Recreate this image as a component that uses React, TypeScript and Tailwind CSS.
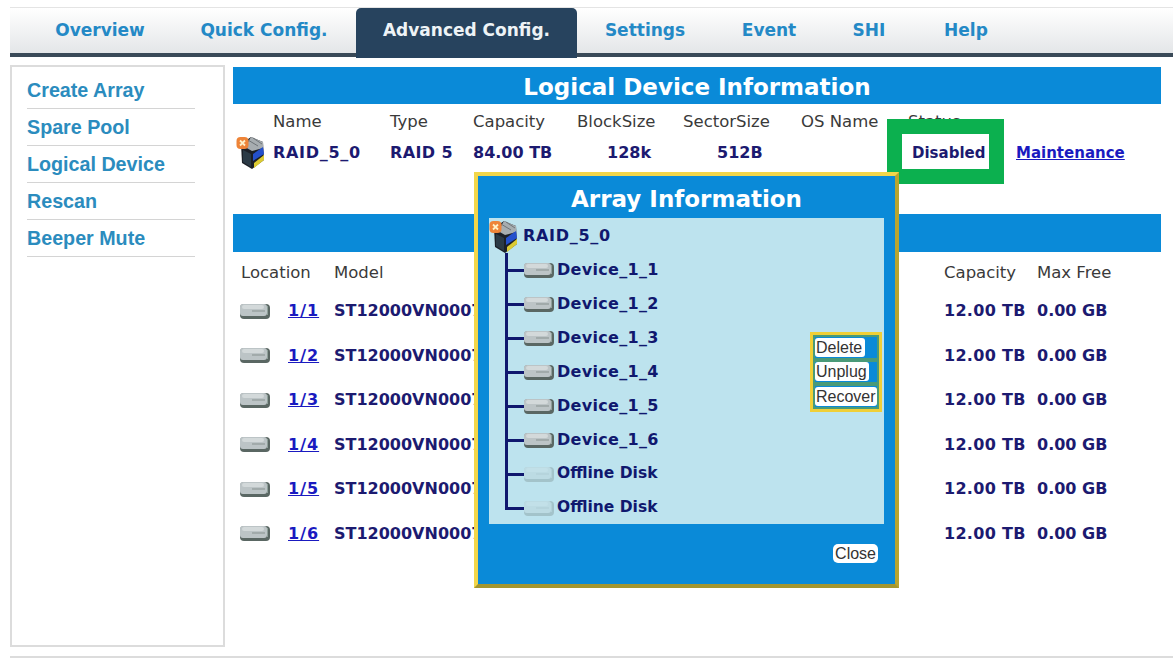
const verdana = "font-['DejaVu_Sans',sans-serif]";

function RaidIcon() {
  return (
    <svg width="30" height="34" viewBox="0 0 30 34" className="block">
      <path d="M5 8 L15 1 L27 6 L28 24 L16 33 L6 27 Z" fill="#1c2028" />
      <path d="M15 1 L27 6 L27 12 L16 15 L9 11 Z" fill="#a7adb0" />
      <path d="M12 4 L22 10 M17 2 L26 8" stroke="#6e7478" strokeWidth="1" />
      <path d="M17 18 L27 11 L28 18 L17 25 Z" fill="#2450cc" />
      <path d="M18 27 L28 19 L28 24 L18 32 Z" fill="#dccb33" />
      <path d="M7 14 L15 18 L15 31 L7 26 Z" fill="#2b3a46" />
      <rect x="0.5" y="1" width="12" height="12" rx="4" fill="#ee8438" />
      <path d="M4 4.5 L9 9.5 M9 4.5 L4 9.5" stroke="#fff0c8" strokeWidth="1.8" />
    </svg>
  );
}

function DiskIcon({ off = false }: { off?: boolean }) {
  return (
    <svg width="30" height="17" viewBox="0 0 30 17" className="block" opacity={off ? 0.25 : 1}>
      <rect x="0" y="1" width="30" height="15" rx="4" fill="#5a6763" />
      <rect x="0" y="1" width="27" height="12" rx="3" fill="#bcc4c6" />
      <rect x="2" y="2" width="22" height="4" rx="2" fill="#d3d9da" />
      <path d="M12 8 L25 8" stroke="#87918f" strokeWidth="1" />
      <path d="M27.5 3 L27.5 12" stroke="#8fa09a" strokeWidth="1" />
    </svg>
  );
}

const navItems = [
  { label: "Overview", w: "w-[180px]" },
  { label: "Quick Config.", w: "w-[166px] pr-[18px]" },
  { label: "Advanced Config.", w: "w-[221px]", active: true },
  { label: "Settings", w: "w-[136px]" },
  { label: "Event", w: "w-[112px]" },
  { label: "SHI", w: "w-[88px]" },
  { label: "Help", w: "w-[106px]" },
];

const sideItems = ["Create Array", "Spare Pool", "Logical Device", "Rescan", "Beeper Mute"];
const disks = ["1/1", "1/2", "1/3", "1/4", "1/5", "1/6"];
const devices = ["Device_1_1", "Device_1_2", "Device_1_3", "Device_1_4", "Device_1_5", "Device_1_6", "Offline Disk", "Offline Disk"];

function ActionButton({ label, w }: { label: string; w: string }) {
  return (
    <div className="h-[24.5px] w-[66px] bg-[#0a8ad8] border-[2px] border-[#4a9a78] flex items-center">
      <span className={`${w} h-[19px] bg-white rounded-[3px] text-[16px] leading-[19px] font-normal text-[#333] font-['Liberation_Sans',sans-serif] pl-[1px]`}>{label}</span>
    </div>
  );
}

export default function App() {
  return (
    <div className={`relative w-[1173px] h-[659px] bg-white overflow-hidden ${verdana}`}>
      <div className="ml-[10px] mt-[7px] h-[50px] flex bg-gradient-to-b from-white to-[#e4e6e8] border-b-[4px] border-[#3a4a58] border-t border-t-[#e4e4e4]">
        {navItems.map((n) => (
          <div
            key={n.label}
            className={`${n.w} h-[50px] shrink-0 flex items-center justify-center text-[17px] font-bold ${n.active ? "bg-[#27435e] text-[#eef3f6] rounded-t-[5px]" : "text-[#2489c6]"}`}
          >
            <span className="-mt-[4px] whitespace-nowrap">{n.label}</span>
          </div>
        ))}
      </div>

      <div className="flex items-start ml-[10px] mt-[8px]">
        <div className="w-[215px] h-[582px] shrink-0 border-2 border-[#dcdcdc] pt-[5px] pl-[15px] font-['Liberation_Sans',sans-serif]">
          {sideItems.map((s) => (
            <div key={s} className="h-[37px] border-b border-[#d4d4d4] pt-[6px] w-[168px] text-[19.7px] leading-[24px] font-bold text-[#2b8cbe] whitespace-nowrap">
              {s}
            </div>
          ))}
        </div>

        <div className="ml-[8px] pt-[2px] w-[928px]">
          <div className="h-[37px] w-[928px] bg-[#0a8ad8] text-white text-[23px] font-bold leading-[41px] text-center">
            Logical Device Information
          </div>
          <div className="flex items-center mt-[6px] h-[24px] text-[16.5px] text-[#3a3a3a]">
            <span className="ml-[40px] w-[117px]">Name</span>
            <span className="w-[83px]">Type</span>
            <span className="w-[104px]">Capacity</span>
            <span className="w-[106px]">BlockSize</span>
            <span className="w-[118px]">SectorSize</span>
            <span className="w-[107px]">OS Name</span>
            <span>Status</span>
          </div>
          <div className="flex items-center h-[36px] text-[16px] font-bold text-[#1c1a70] mt-[1px]">
            <span className="ml-[3px] w-[37px] -mt-[1px]"><RaidIcon /></span>
            <span className="w-[117px] tracking-[0.7px]">RAID_5_0</span>
            <span className="w-[83px] tracking-[0.4px]">RAID 5</span>
            <span className="w-[104px]">84.00 TB</span>
            <span className="w-[106px] pl-[30px]">128k</span>
            <span className="w-[118px] pl-[34px]">512B</span>
            <span className="w-[111px]"></span>
            <span className="w-[104px] text-[15px]">Disabled</span>
            <span className="text-[15px] text-[#1a1ac0] underline">Maintenance</span>
          </div>

          <div className="h-[38px] w-[928px] bg-[#0a8ad8] mt-[43px]"></div>

          <div className="flex items-center h-[24px] mt-[9px] text-[16.5px] text-[#3a3a3a]">
            <span className="ml-[8px] w-[93px]">Location</span>
            <span className="w-[610px]">Model</span>
            <span className="w-[93px]">Capacity</span>
            <span>Max Free</span>
          </div>
          <div className="mt-[8px] flex flex-col gap-[8.6px]">
            {disks.map((d) => (
              <div key={d} className="flex items-center h-[36px] text-[16px] font-bold text-[#1c1a70]">
                <span className="ml-[7px] w-[48px]"><DiskIcon /></span>
                <span className="w-[46px] text-[#1a1ac0] underline tracking-[1px]">{d}</span>
                <span className="w-[610px] whitespace-nowrap">ST12000VN0007</span>
                <span className="w-[93px] whitespace-nowrap tracking-[0.3px]">12.00 TB</span>
                <span className="whitespace-nowrap">0.00 GB</span>
              </div>
            ))}
          </div>
        </div>
      </div>

      <div className="ml-[10px] mt-[9px] border-t-2 border-[#dcdcdc]"></div>

      <div className="absolute left-[887px] top-[119px] w-[117px] h-[65px] border-[15px] border-[#0cb04f]"></div>

      <div className="absolute left-[474px] top-[172px] w-[425px] h-[416px] bg-[#0a8ad8] border-[4px] border-[#f2d64a] border-r-[#b9a52f] border-b-[#a3962f] px-[11px] flex flex-col">
        <div className="h-[42px] shrink-0 text-white text-[23px] font-bold leading-[46px] text-center">Array Information</div>
        <div className="relative h-[306px] bg-[#bde3ee] shrink-0 text-[16px] font-bold text-[#10186e]">
          <div className="flex items-center h-[35px]">
            <span className="mt-[2px] w-[34px]"><RaidIcon /></span>
            <span className="tracking-[0.7px]">RAID_5_0</span>
          </div>
          {devices.map((d, i) => (
            <div key={i} className="relative flex items-center h-[34px] pl-[35px]">
              <span className={`absolute left-[16px] w-[3px] bg-[#10186e] top-0 ${i === devices.length - 1 ? "h-[18px]" : "h-[34px]"}`}></span>
              <span className="absolute left-[16px] top-[16px] w-[19px] h-[3px] bg-[#10186e]"></span>
              <span className="w-[33px]"><DiskIcon off={i > 5} /></span>
              <span className={`whitespace-nowrap ${i > 5 ? "text-[15.5px]" : "tracking-[0.3px]"}`}>{d}</span>
            </div>
          ))}
          <div className="absolute left-[321px] top-[114px] w-[72px] border-[3px] border-[#f0cf36] flex flex-col">
            <ActionButton label="Delete" w="w-[50px]" />
            <ActionButton label="Unplug" w="w-[54px]" />
            <ActionButton label="Recover" w="w-[62px]" />
          </div>
        </div>
        <div className="flex justify-end pt-[20px] pr-[6px]">
          <span className="h-[19px] px-[2px] bg-white rounded-[5px] text-[16px] leading-[19px] font-normal text-[#333] font-['Liberation_Sans',sans-serif]">Close</span>
        </div>
      </div>
    </div>
  );
}
